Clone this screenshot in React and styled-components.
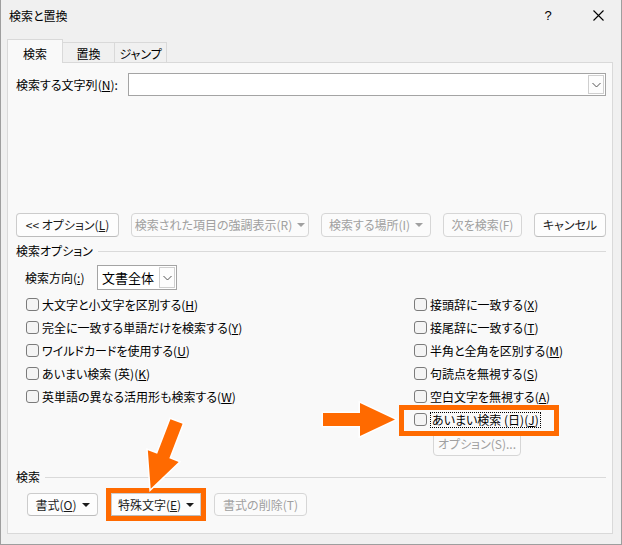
import React from 'react';
import styled, { createGlobalStyle, css } from 'styled-components';

const ORANGE = '#ff6a00';

const GlobalStyle = createGlobalStyle`
  html, body {
    margin: 0;
    padding: 0;
    background: #f0f0f0;
  }
  body {
    font-family: "Noto Sans CJK JP", "Noto Sans", sans-serif;
    font-size: 12px;
    color: #1b1b1b;
    font-feature-settings: "palt";
  }
`;

const Window = styled.div`
  position: relative;
  width: 622px;
  height: 545px;
  box-sizing: border-box;
  border: 1px solid #9e9e9e;
  border-top: none;
  background: #f0f0f0;
  display: flex;
  flex-direction: column;
`;

const TitleBar = styled.div`
  height: 31px;
  display: flex;
  align-items: center;
  padding-left: 8px;
`;

const Title = styled.div`
  flex: 1;
  line-height: 16px;
  color: #000;
`;

const CaptionButton = styled.div`
  width: 46px;
  height: 31px;
  box-sizing: border-box;
  display: flex;
  align-items: center;
  justify-content: center;
  padding-right: ${(p) => p.$shift || 0}px;
  font-family: "Liberation Sans", sans-serif;
  font-size: 13px;
  color: #000;
`;

const Body = styled.div`
  flex: 1;
  display: flex;
  flex-direction: column;
  padding: 8px 8px 10px 6px;
`;

const TabStrip = styled.div`
  display: flex;
  align-items: flex-end;
  height: 24px;
  margin-bottom: -1px;
  position: relative;
  z-index: 1;
`;

const Tab = styled.div`
  box-sizing: border-box;
  width: ${(p) => p.$w}px;
  border: 1px solid #d9d9d9;
  border-bottom: none;
  text-align: center;
  line-height: 16px;
  color: #000;
  ${(p) =>
    p.$active
      ? css`
          height: 24px;
          padding-top: 6px;
          background: #f9f9f9;
        `
      : css`
          height: 21px;
          padding-top: 3px;
          background: #f0f0f0;
          border-left: none;
          border-bottom: 1px solid #d9d9d9;
        `}
`;

const Panel = styled.div`
  flex: 1;
  display: flex;
  flex-direction: column;
  border: 1px solid #d9d9d9;
  background: #f9f9f9;
  padding: 10px 6px 0 8px;
`;

const FindRow = styled.div`
  display: flex;
  align-items: center;
  height: 23px;
`;

const FieldLabel = styled.div`
  width: ${(p) => p.$w}px;
  flex: none;
  line-height: 16px;
  color: #000;
`;

const Combo = styled.div`
  box-sizing: border-box;
  height: ${(p) => p.$h || 23}px;
  width: ${(p) => (p.$w ? `${p.$w}px` : 'auto')};
  flex: ${(p) => (p.$w ? 'none' : 1)};
  border: 1px solid #a4a4a4;
  background: #fff;
  display: flex;
  align-items: stretch;
`;

const ComboText = styled.div`
  flex: 1;
  padding-left: 4px;
  display: flex;
  align-items: center;
  font-size: 13px;
  color: #000;
`;

const ComboDrop = styled.div`
  width: 16px;
  margin: 1px;
  box-sizing: border-box;
  border: 1px solid #cfcfcf;
  background: #fdfdfd;
  display: flex;
  align-items: center;
  justify-content: center;
`;

const ButtonRow = styled.div`
  display: flex;
  justify-content: ${(p) => p.$justify || 'flex-start'};
  gap: ${(p) => p.$gap || 0}px;
  margin-top: ${(p) => p.$top}px;
  padding-left: ${(p) => p.$indent || 0}px;
`;

const Button = styled.div`
  box-sizing: border-box;
  width: ${(p) => p.$w}px;
  height: ${(p) => p.$h || 24}px;
  flex: none;
  border: 1px solid ${(p) => (p.$disabled ? '#d6d6d6' : '#cccccc')};
  border-bottom-color: ${(p) => (p.$disabled ? '#d6d6d6' : '#bcbcbc')};
  border-radius: 4px;
  background: ${(p) => (p.$disabled ? '#fbfbfb' : '#fdfdfd')};
  color: ${(p) => (p.$disabled ? '#a0a0a0' : '#1b1b1b')};
  display: flex;
  align-items: center;
  justify-content: center;
  line-height: 16px;
  white-space: nowrap;
  ${(p) =>
    p.$highlight &&
    css`
      outline: 5px solid ${ORANGE};
      outline-offset: 0;
      border-radius: 0;
    `}
`;

const Caret = styled.span`
  display: inline-block;
  width: 0;
  height: 0;
  margin-left: 5px;
  border-left: 4px solid transparent;
  border-right: 4px solid transparent;
  border-top: 4px solid currentColor;
`;

const GroupHeader = styled.div`
  display: flex;
  align-items: center;
  gap: 5px;
  height: 16px;
  margin-top: ${(p) => p.$top}px;
  line-height: 16px;
  color: #000;
  &::after {
    content: '';
    flex: 1;
    height: 1px;
    background: #dadada;
  }
`;

const DirectionRow = styled.div`
  display: flex;
  align-items: center;
  gap: 10px;
  margin-top: 6px;
  padding-left: 9px;
`;

const OptionsGrid = styled.div`
  display: grid;
  grid-template-columns: 388px 1fr;
  margin-top: 3px;
  padding-left: 10px;
`;

const Column = styled.div`
  display: flex;
  flex-direction: column;
  align-items: flex-start;
`;

const CheckRow = styled.div`
  position: relative;
  height: 23px;
  display: flex;
  align-items: center;
  gap: 3px;
  color: #000;
  line-height: 16px;
  white-space: nowrap;
  ${(p) =>
    p.$highlight &&
    css`
      &::after {
        content: '';
        position: absolute;
        left: -15px;
        top: -3px;
        width: 160px;
        height: 31px;
        box-sizing: border-box;
        border: 5px solid ${ORANGE};
      }
    `}
`;

const Box = styled.span`
  width: 13px;
  height: 13px;
  box-sizing: border-box;
  border: 1px solid #7b7b7b;
  border-radius: 3px;
  background: #f4f4f4;
  flex: none;
`;

const CheckText = styled.span`
  ${(p) =>
    p.$focus &&
    css`
      border: 1px dotted #000;
      padding: 0 1px;
      line-height: 14px;
    `}
`;

const ArrowLayer = styled.svg`
  position: absolute;
  left: -1px;
  top: 0;
  pointer-events: none;
`;

const Chevron = () => (
  <svg width="9" height="6" viewBox="0 0 9 6">
    <path d="M0.5 1 L4.5 5 L8.5 1" fill="none" stroke="#555" strokeWidth="1" />
  </svg>
);

const CloseIcon = () => (
  <svg width="11" height="11" viewBox="0 0 11 11">
    <path d="M0.5 0.5 L10.5 10.5 M10.5 0.5 L0.5 10.5" stroke="#000" strokeWidth="1.1" />
  </svg>
);

const ARROW = '0,-6.5 37,-6.5 37,-16.5 72,0 37,16.5 37,6.5 0,6.5';

const Arrow = ({ x, y, angle }) => (
  <polygon
    points={ARROW}
    transform={`translate(${x} ${y}) rotate(${angle})`}
    fill={ORANGE}
    stroke="#fff"
    strokeWidth="3"
    strokeLinejoin="miter"
    paintOrder="stroke"
  />
);

const Key = ({ k }) => (
  <>
    (<u>{k}</u>)
  </>
);

const leftOptions = [
  ['大文字と小文字を区別する', 'H'],
  ['完全に一致する単語だけを検索する', 'Y'],
  ['ワイルドカードを使用する', 'U'],
  ['あいまい検索 (英)', 'K'],
  ['英単語の異なる活用形も検索する', 'W'],
];

const rightOptions = [
  ['接頭辞に一致する', 'X'],
  ['接尾辞に一致する', 'T'],
  ['半角と全角を区別する', 'M'],
  ['句読点を無視する', 'S'],
  ['空白文字を無視する', 'A'],
];

export default function App() {
  return (
    <>
      <GlobalStyle />
      <Window>
        <TitleBar>
          <Title>検索と置換</Title>
          <CaptionButton $shift={8}>?</CaptionButton>
          <CaptionButton>
            <CloseIcon />
          </CaptionButton>
        </TitleBar>
        <Body>
          <TabStrip>
            <Tab $active $w={56}>検索</Tab>
            <Tab $w={52}>置換</Tab>
            <Tab $w={52}>ジャンプ</Tab>
          </TabStrip>
          <Panel>
            <FindRow>
              <FieldLabel $w={112}>
                検索する文字列<Key k="N" />:
              </FieldLabel>
              <Combo>
                <ComboText />
                <ComboDrop>
                  <Chevron />
                </ComboDrop>
              </Combo>
            </FindRow>

            <ButtonRow $top={117} $justify="space-between">
              <Button $w={103}>
                &lt;&lt; オプション<Key k="L" />
              </Button>
              <Button $w={178} $disabled>
                検索された項目の強調表示(R)
                <Caret />
              </Button>
              <Button $w={110} $disabled>
                検索する場所(I)
                <Caret />
              </Button>
              <Button $w={79} $disabled>
                次を検索(F)
              </Button>
              <Button $w={72}>キャンセル</Button>
            </ButtonRow>

            <GroupHeader $top={6}>検索オプション</GroupHeader>
            <DirectionRow>
              <FieldLabel $w={62}>
                検索方向<Key k=":" />
              </FieldLabel>
              <Combo $w={80} $h={25}>
                <ComboText>文書全体</ComboText>
                <ComboDrop>
                  <Chevron />
                </ComboDrop>
              </Combo>
            </DirectionRow>

            <OptionsGrid>
              <Column>
                {leftOptions.map(([label, k]) => (
                  <CheckRow key={k}>
                    <Box />
                    <CheckText>
                      {label}
                      <Key k={k} />
                    </CheckText>
                  </CheckRow>
                ))}
              </Column>
              <Column>
                {rightOptions.map(([label, k]) => (
                  <CheckRow key={k}>
                    <Box />
                    <CheckText>
                      {label}
                      <Key k={k} />
                    </CheckText>
                  </CheckRow>
                ))}
                <CheckRow $highlight>
                  <Box />
                  <CheckText $focus>
                    あいまい検索 (日)
                    <Key k="J" />
                  </CheckText>
                </CheckRow>
                <ButtonRow $top={1} $indent={19}>
                  <Button $w={88} $disabled>
                    オプション(S)...
                  </Button>
                </ButtonRow>
              </Column>
            </OptionsGrid>

            <GroupHeader $top={13}>検索</GroupHeader>
            <ButtonRow $top={8} $indent={11} $gap={13}>
              <Button $w={71} $h={23}>
                書式<Key k="O" />
                <Caret />
              </Button>
              <Button $w={90} $h={23} $highlight>
                特殊文字<Key k="E" />
                <Caret />
              </Button>
              <Button $w={93} $h={23} $disabled>
                書式の削除(T)
              </Button>
            </ButtonRow>
          </Panel>
        </Body>
        <ArrowLayer width="622" height="545" viewBox="0 0 622 545">
          <Arrow x={323} y={419.5} angle={0} />
          <Arrow x={176.5} y={421.5} angle={111} />
        </ArrowLayer>
      </Window>
    </>
  );
}
